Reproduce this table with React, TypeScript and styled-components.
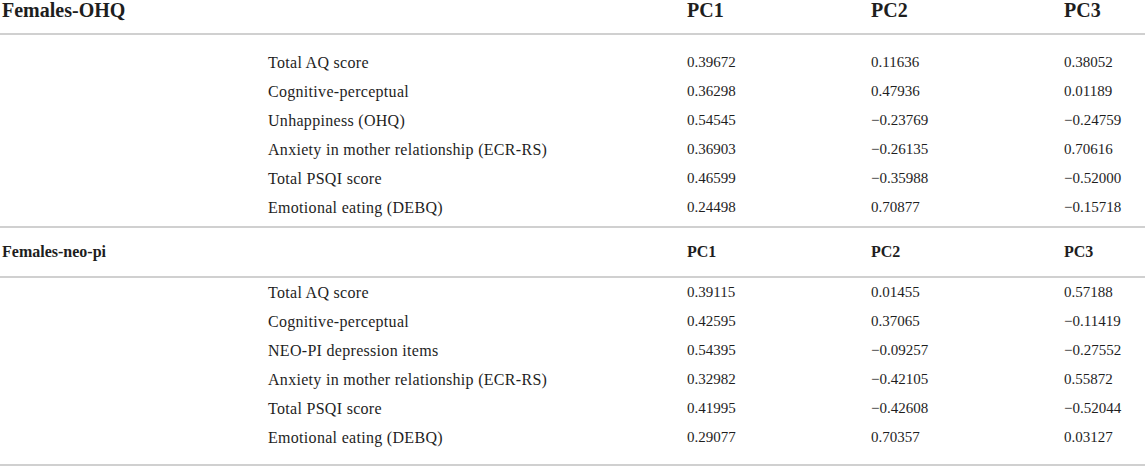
import React from "react";
import styled, { createGlobalStyle } from "styled-components";

const GlobalStyle = createGlobalStyle`
  html, body {
    margin: 0;
    padding: 0;
    background: #ffffff;
  }
  body {
    font-family: "Liberation Serif", "Times New Roman", serif;
    color: #1e1e1e;
  }
`;

const Table = styled.div`
  width: 1145px;
  display: flex;
  flex-direction: column;
`;

const Section = styled.section`
  display: flex;
  flex-direction: column;
`;

const grid = `
  display: grid;
  grid-template-columns: 268px 419px 184px 193px 1fr;
`;

const HeaderRow = styled.div<{ $size: "lg" | "md" }>`
  ${grid}
  box-sizing: border-box;
  height: ${(p) => (p.$size === "lg" ? "35px" : "50px")};
  align-items: ${(p) => (p.$size === "lg" ? "start" : "center")};
  font-weight: 700;
  font-size: ${(p) => (p.$size === "lg" ? "20px" : "16px")};
  line-height: 20px;
  border-bottom: 2px solid #d0d0d0;
`;

const GroupName = styled.div`
  grid-column: 1 / span 2;
  padding-left: 2px;
`;

const HeadCell = styled.div``;

const Body = styled.div<{ $top: number; $bottom: number }>`
  display: flex;
  flex-direction: column;
  padding-top: ${(p) => p.$top}px;
  padding-bottom: ${(p) => p.$bottom}px;
  border-bottom: 2px solid #d0d0d0;
`;

const Row = styled.div`
  ${grid}
  height: 29px;
  align-items: center;
`;

const Label = styled.div`
  grid-column: 2;
  font-size: 16px;
  letter-spacing: 0.3px;
  white-space: nowrap;
`;

const Value = styled.div`
  font-size: 15px;
  white-space: nowrap;
`;

type Item = [string, string, string, string];

const ohq: Item[] = [
  ["Total AQ score", "0.39672", "0.11636", "0.38052"],
  ["Cognitive-perceptual", "0.36298", "0.47936", "0.01189"],
  ["Unhappiness (OHQ)", "0.54545", "\u22120.23769", "\u22120.24759"],
  ["Anxiety in mother relationship (ECR-RS)", "0.36903", "\u22120.26135", "0.70616"],
  ["Total PSQI score", "0.46599", "\u22120.35988", "\u22120.52000"],
  ["Emotional eating (DEBQ)", "0.24498", "0.70877", "\u22120.15718"],
];

const neo: Item[] = [
  ["Total AQ score", "0.39115", "0.01455", "0.57188"],
  ["Cognitive-perceptual", "0.42595", "0.37065", "\u22120.11419"],
  ["NEO-PI depression items", "0.54395", "\u22120.09257", "\u22120.27552"],
  ["Anxiety in mother relationship (ECR-RS)", "0.32982", "\u22120.42105", "0.55872"],
  ["Total PSQI score", "0.41995", "\u22120.42608", "\u22120.52044"],
  ["Emotional eating (DEBQ)", "0.29077", "0.70357", "0.03127"],
];

function Group({
  name,
  size,
  items,
  top,
  bottom,
}: {
  name: string;
  size: "lg" | "md";
  items: Item[];
  top: number;
  bottom: number;
}) {
  return (
    <Section>
      <HeaderRow $size={size}>
        <GroupName>{name}</GroupName>
        <HeadCell>PC1</HeadCell>
        <HeadCell>PC2</HeadCell>
        <HeadCell>PC3</HeadCell>
      </HeaderRow>
      <Body $top={top} $bottom={bottom}>
        {items.map(([label, a, b, c]) => (
          <Row key={label}>
            <Label>{label}</Label>
            <Value>{a}</Value>
            <Value>{b}</Value>
            <Value>{c}</Value>
          </Row>
        ))}
      </Body>
    </Section>
  );
}

export default function App() {
  return (
    <>
      <GlobalStyle />
      <Table>
        <Group name="Females-OHQ" size="lg" items={ohq} top={13} bottom={4} />
        <Group name="Females-neo-pi" size="md" items={neo} top={0} bottom={12} />
      </Table>
    </>
  );
}
